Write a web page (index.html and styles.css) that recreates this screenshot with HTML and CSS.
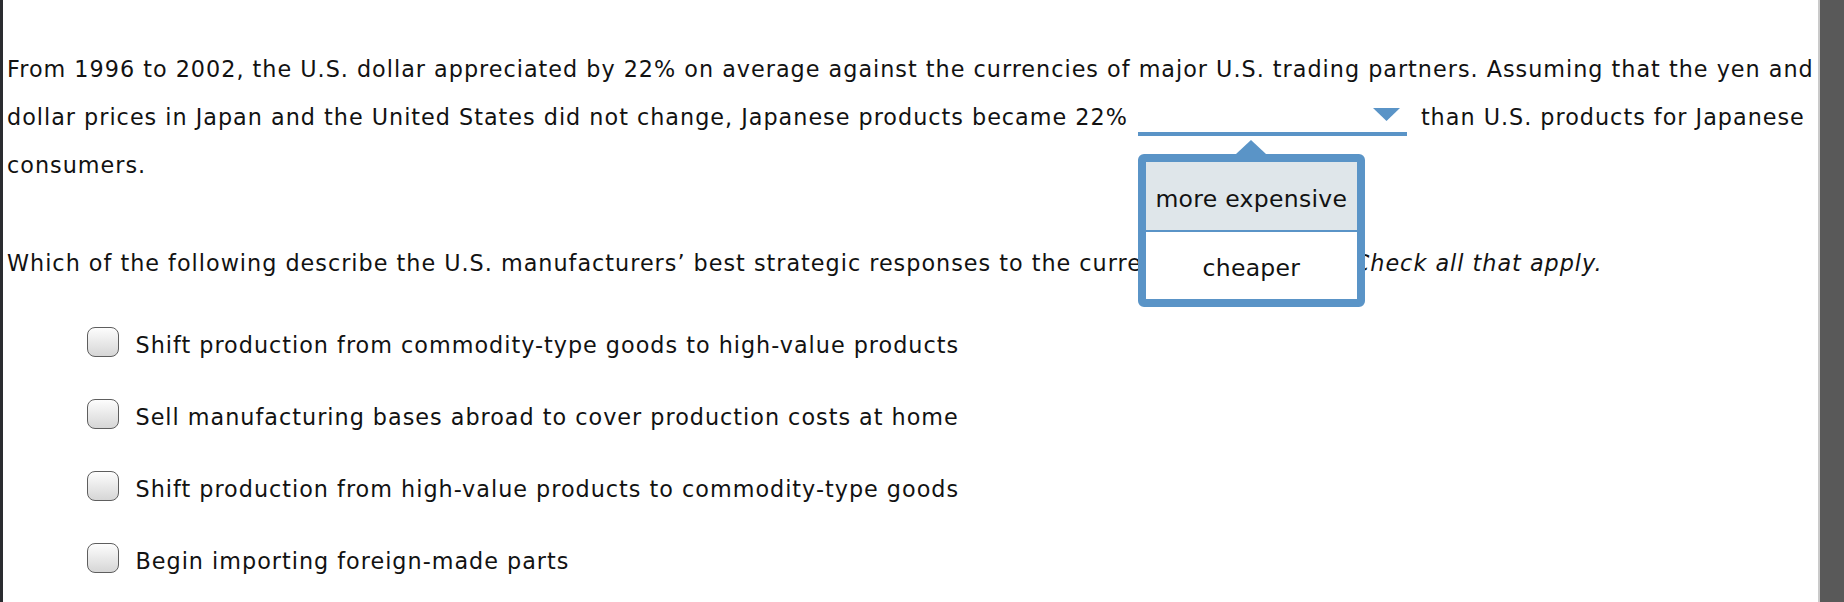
FILE: index.html
```html
<!DOCTYPE html>
<html lang="en">
<head>
<meta charset="utf-8">
<title>Question</title>
<link rel="stylesheet" href="styles.css">
</head>
<body>
<div class="window">
  <div class="edge-left"></div>
  <main class="content">
    <p class="text question">From 1996 to 2002, the U.S. dollar appreciated by 22% on average against the currencies of major U.S. trading partners. Assuming that the yen and<br>dollar prices in Japan and the United States did not change, Japanese products became 22%<span class="dropdown"><span class="dropdown-value">&nbsp;</span><svg class="dropdown-arrow" width="27" height="13" viewBox="0 0 27 13"><polygon points="0,0 27,0 13.5,13" fill="#5a94c7"/></svg><span class="menu"><span class="menu-caret"></span><span class="menu-box"><span class="menu-option is-active">more expensive</span><span class="menu-option">cheaper</span></span></span></span>than U.S. products for Japanese<br>consumers.</p>
    <p class="text prompt">Which of the following describe the U.S. manufacturers’ best strategic responses to the currency appreciation? <em>Check all that apply.</em></p>
    <ul class="choices">
      <li class="choice"><span class="checkbox"></span><span class="choice-label">Shift production from commodity-type goods to high-value products</span></li>
      <li class="choice"><span class="checkbox"></span><span class="choice-label">Sell manufacturing bases abroad to cover production costs at home</span></li>
      <li class="choice"><span class="checkbox"></span><span class="choice-label">Shift production from high-value products to commodity-type goods</span></li>
      <li class="choice"><span class="checkbox"></span><span class="choice-label">Begin importing foreign-made parts</span></li>
    </ul>
  </main>
  <div class="scroll-edge"></div>
</div>
</body>
</html>
```
FILE: styles.css
```css
html, body {
  margin: 0;
  padding: 0;
  background: #ffffff;
}

body {
  font-family: "DejaVu Sans", Verdana, sans-serif;
  color: #121212;
  overflow: hidden;
}

.window {
  display: flex;
  width: 1844px;
  height: 602px;
  overflow: hidden;
}

.edge-left {
  flex: 0 0 3px;
  background: #2a2c30;
}

.content {
  flex: 1 1 auto;
  min-width: 0;
  padding: 45px 0 0 4px;
  overflow: hidden;
  background: #ffffff;
}

.scroll-edge {
  flex: 0 0 24px;
  background: #595959;
  border-left: 2px solid #cacaca;
}

.text {
  margin: 0;
  font-size: 22.3px;
  line-height: 48px;
  letter-spacing: 1px;
  white-space: nowrap;
}

.prompt {
  margin-top: 50px;
}

.prompt em {
  font-style: italic;
  margin-left: -11px;
}

/* dropdown */
.dropdown {
  position: relative;
  display: inline-block;
  box-sizing: border-box;
  width: 269px;
  margin: 0 14px 0 10px;
  padding: 0 7px 1.5px 0;
  line-height: 26px;
  text-align: right;
  border-bottom: 4px solid #5a94c7;
  vertical-align: baseline;
}

.dropdown-value {
  display: inline;
}

.dropdown-arrow {
  vertical-align: 4px;
}

.menu {
  position: absolute;
  z-index: 2;
  top: calc(100% + 8px);
  left: 0;
  width: 227px;
  display: flex;
  flex-direction: column;
  align-items: center;
  text-align: center;
  letter-spacing: 0.3px;
}

.menu-caret {
  display: block;
  width: 0;
  height: 0;
  border-left: 15px solid transparent;
  border-right: 15px solid transparent;
  border-bottom: 14px solid #5a94c7;
}

.menu-box {
  display: flex;
  flex-direction: column;
  box-sizing: border-box;
  width: 227px;
  border: 8px solid #5a94c7;
  border-radius: 6px;
  background: #ffffff;
}

.menu-option {
  display: flex;
  align-items: center;
  justify-content: center;
  box-sizing: border-box;
  height: 67px;
  padding-top: 6px;
  font-size: 23.5px;
  line-height: normal;
  color: #121212;
  background: #ffffff;
}

.menu-option.is-active {
  height: 70px;
  background: #dfe6ea;
  border-bottom: 2px solid #5a94c7;
}

/* choices */
.choices {
  list-style: none;
  margin: 34px 0 0 80px;
  padding: 0;
  display: flex;
  flex-direction: column;
  gap: 24px;
}

.choice {
  display: flex;
  align-items: flex-start;
  gap: 16.5px;
  font-size: 22.3px;
  line-height: 48px;
  letter-spacing: 1px;
  white-space: nowrap;
}

.checkbox {
  flex: 0 0 auto;
  box-sizing: border-box;
  width: 32px;
  height: 30px;
  margin-top: 5.5px;
  border: 1.5px solid #5e5e5e;
  border-radius: 8px;
  background: linear-gradient(#fdfdfd, #d6d6d6);
}
```
